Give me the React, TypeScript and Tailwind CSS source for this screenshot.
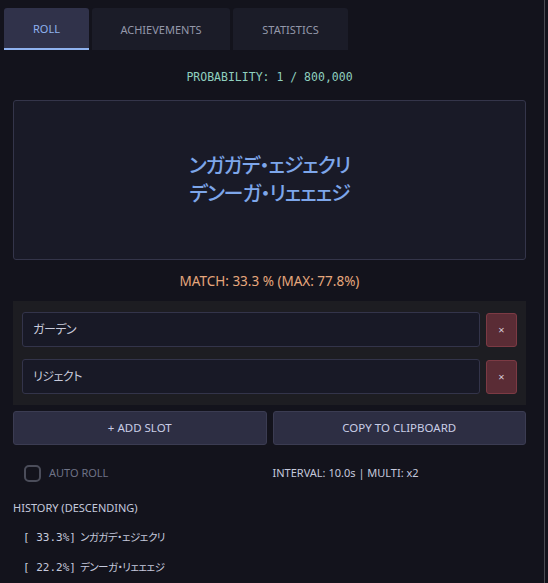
import React, { useState } from 'react';

const tabs = ['ROLL', 'ACHIEVEMENTS', 'STATISTICS'];

const history = [
  { pct: '[ 33.3%]', name: 'ンガガデ・ェジェクリ' },
  { pct: '[ 22.2%]', name: 'デンーガ・リェェェジ' },
];

const mono = { fontFamily: '"DejaVu Sans Mono", "Liberation Mono", monospace' };

export default function App() {
  const [active, setActive] = useState(0);
  const [slots] = useState(['ガーデン', 'リジェクト']);

  return (
    <div
      className="flex h-[583px] w-[548px] overflow-hidden bg-[#13131c] text-[#c5c9dc] [font-feature-settings:'palt']"
      style={{ fontFamily: '"Noto Sans", "Noto Sans CJK JP", sans-serif' }}
    >
      <div className="flex w-[545px] flex-col border-r border-[#4a4a52]">
        {/* Tabs */}
        <div className="flex gap-[3px] px-[4px] pt-[8px]">
          {tabs.map((t, i) => (
            <button
              key={t}
              onClick={() => setActive(i)}
              className={
                i === active
                  ? 'h-[42px] w-[85px] rounded-t-[3px] border-b-2 border-[#8fb2ef] bg-[#30324a] pt-[2px] text-[11px] text-[#8fb2ef]'
                  : 'h-[42px] rounded-t-[3px] bg-[#1b1c28] pt-[2px] text-[11px] text-[#9498aa] ' + (i === 1 ? 'w-[138px]' : 'w-[115px]')
              }
            >
              {t}
            </button>
          ))}
        </div>

        <div className="flex flex-col pl-[13px] pr-[18px]">
          <div className="mt-[19px] text-center text-[11.5px] leading-[16px] text-[#8fd0bf]" style={mono}>
            PROBABILITY: 1 / 800,000
          </div>

          {/* Result box */}
          <div className="mt-[15px] flex h-[160px] flex-col items-center justify-center rounded-[3px] border border-[#34354a] bg-[#191a27] text-[20px] font-medium leading-[28px] tracking-[-1px] text-[#7da6ea]">
            <div>ンガガデ・ェジェクリ</div>
            <div>デンーガ・リェェェジ</div>
          </div>

          <div className="mt-[12px] text-center text-[13.5px] leading-[18px] text-[#e6a77c]">
            MATCH: 33.3 % (MAX: 77.8%)
          </div>

          {/* Slots */}
          <div className="mt-[11px] flex flex-col gap-[12px] bg-[#1d1d22] px-[9px] py-[11px]">
            {slots.map((s) => (
              <div key={s} className="flex gap-[6px]">
                <div className="flex h-[35px] flex-1 items-center rounded-[3px] border border-[#33344a] bg-[#181926] px-[10px] text-[12px] tracking-[-0.5px] text-[#c8cbdc]">
                  {s}
                </div>
                <button className="mt-[1px] h-[34px] w-[31px] rounded-[3px] border border-[#7c3a44] bg-[#5a2c35] text-[11px] text-[#d6c9d8]">
                  ×
                </button>
              </div>
            ))}
          </div>

          {/* Actions */}
          <div className="mt-[6px] grid grid-cols-2 gap-[6px]">
            <button className="h-[34px] rounded-[3px] border border-[#3b3c52] bg-[#2d2e43] text-[11.5px] text-[#c9cde6]">
              + ADD SLOT
            </button>
            <button className="h-[34px] rounded-[3px] border border-[#3b3c52] bg-[#2d2e43] text-[11.5px] text-[#c9cde6]">
              COPY TO CLIPBOARD
            </button>
          </div>

          <div className="mt-[20px] grid grid-cols-2 gap-[6px]">
            <label className="flex items-center gap-[8px] pl-[11px]">
              <span className="h-[17px] w-[17px] rounded-[5px] border-2 border-[#4b4d5a]" />
              <span className="text-[11px] text-[#6e7286]">AUTO ROLL</span>
            </label>
            <div className="flex items-center text-[11px] text-[#c5c9dc]">INTERVAL: 10.0s | MULTI: x2</div>
          </div>

          <div className="mt-[18px] text-[11px] leading-[16px] text-[#c5c9dc]">HISTORY (DESCENDING)</div>

          <div className="mt-[7px] flex flex-col">
            {history.map((h) => (
              <div key={h.pct} className="flex h-[30px] items-center gap-[4px] pl-[10px] text-[11px] text-[#c5c9dc]">
                <span className="whitespace-pre" style={mono}>
                  {h.pct}
                </span>
                <span className="text-[10.5px] tracking-[-0.5px]">{h.name}</span>
              </div>
            ))}
          </div>
        </div>
      </div>
    </div>
  );
}
